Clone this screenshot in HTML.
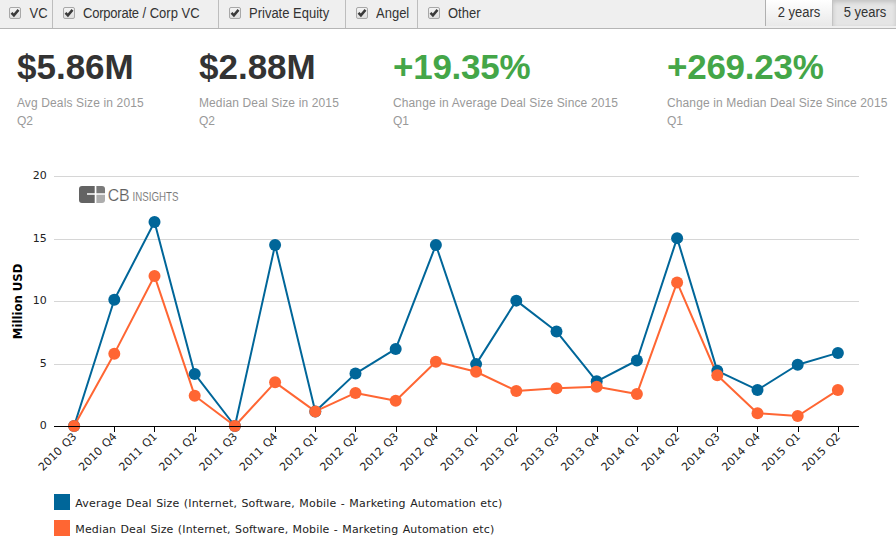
<!DOCTYPE html>
<html><head><meta charset="utf-8"><title>Deal Size</title>
<style>
html,body{margin:0;padding:0;background:#fff;}
body{width:896px;height:552px;overflow:hidden;position:relative;font-family:"Liberation Sans",sans-serif;color:#333;}
#bar{position:absolute;left:0;top:0;width:896px;height:28px;background:#efefef;border-bottom:1px solid #b5b5b5;box-sizing:content-box;}
.item{position:absolute;top:0;height:28px;border-right:1px solid #bdbdbd;box-sizing:border-box;font-size:13px;line-height:28px;color:#333;white-space:nowrap;}
.item .cb{position:absolute;top:7px;width:12px;height:12px;box-sizing:border-box;border:1px solid #a8a8a8;border-radius:2px;background:linear-gradient(#f4f4f4,#dedede);}
.item .cb svg{position:absolute;left:-1px;top:-1px;}
.item .t{position:absolute;top:0;transform:scaleY(1.08);transform-origin:0 18px;}
.btn{position:absolute;top:0;height:26px;box-sizing:border-box;font-size:13px;line-height:26px;text-align:center;color:#333;}
#b2{left:765px;width:68px;border-left:1px solid #b0b0b0;border-right:1px solid #c4c4c4;background:linear-gradient(#ffffff,#e9e9e9);}
#b5{left:833px;width:63px;padding-left:1px;background:#e5e5e5;box-shadow:inset 0 2px 4px rgba(0,0,0,0.16);}
.bt{display:inline-block;transform:scaleY(1.08);transform-origin:0 17px;}
.big{position:absolute;top:47px;font-size:35px;font-weight:bold;line-height:40px;white-space:nowrap;color:#333;}
.big.g{color:#44a648;letter-spacing:-0.25px;}
.lab{position:absolute;top:94px;font-size:12px;line-height:18px;color:#999;white-space:nowrap;letter-spacing:0.14px;}
#chart{position:absolute;left:0;top:0;}
</style></head><body>
<div id="bar">
 <div class="item" style="left:0;width:53px"><span class="cb" style="left:9px"><svg width="12" height="12" viewBox="0 0 12 12"><path d="M2.5 5.9 L4.9 8.4 L9.5 2.9" fill="none" stroke="#3a3a3a" stroke-width="2.5"/></svg></span><span class="t" style="left:29.5px">VC</span></div>
 <div class="item" style="left:53px;width:166px"><span class="cb" style="left:10px"><svg width="12" height="12" viewBox="0 0 12 12"><path d="M2.5 5.9 L4.9 8.4 L9.5 2.9" fill="none" stroke="#3a3a3a" stroke-width="2.5"/></svg></span><span class="t" style="left:30px"><span style="letter-spacing:-0.22px">Corporate</span> / Corp VC</span></div>
 <div class="item" style="left:219px;width:127px"><span class="cb" style="left:10px"><svg width="12" height="12" viewBox="0 0 12 12"><path d="M2.5 5.9 L4.9 8.4 L9.5 2.9" fill="none" stroke="#3a3a3a" stroke-width="2.5"/></svg></span><span class="t" style="left:30px">Private Equity</span></div>
 <div class="item" style="left:346px;width:72px"><span class="cb" style="left:10px"><svg width="12" height="12" viewBox="0 0 12 12"><path d="M2.5 5.9 L4.9 8.4 L9.5 2.9" fill="none" stroke="#3a3a3a" stroke-width="2.5"/></svg></span><span class="t" style="left:30px">Angel</span></div>
 <div class="item" style="left:418px;width:100px;border-right:none"><span class="cb" style="left:10px"><svg width="12" height="12" viewBox="0 0 12 12"><path d="M2.5 5.9 L4.9 8.4 L9.5 2.9" fill="none" stroke="#3a3a3a" stroke-width="2.5"/></svg></span><span class="t" style="left:30px">Other</span></div>
 <div class="btn" id="b2"><span class="bt">2 years</span></div>
 <div class="btn" id="b5"><span class="bt">5 years</span></div>
</div>
<div class="big" style="left:17px">$5.86M</div>
<div class="lab" style="left:16.9px;width:160px"><span id="l1">Avg Deals Size in 2015</span><br>Q2</div>
<div class="big" style="left:199px">$2.88M</div>
<div class="lab" style="left:198.9px;width:160px"><span id="l2">Median Deal Size in 2015</span><br>Q2</div>
<div class="big g" style="left:393px">+19.35%</div>
<div class="lab" style="left:392.9px;width:240px"><span id="l3">Change in Average Deal Size Since 2015</span><br>Q1</div>
<div class="big g" style="left:667px">+269.23%</div>
<div class="lab" style="left:666.9px;width:228px"><span id="l4">Change in Median Deal Size Since 2015</span><br>Q1</div>
<svg id="chart" width="896" height="552" viewBox="0 0 896 552" font-family="'DejaVu Sans', 'Liberation Sans', sans-serif" font-size="11"><rect x="54" y="364" width="805" height="1" fill="#d6d6d6"/><rect x="54" y="301" width="805" height="1" fill="#d6d6d6"/><rect x="54" y="239" width="805" height="1" fill="#d6d6d6"/><rect x="54" y="176" width="805" height="1" fill="#d6d6d6"/><text x="46.8" y="428.90" text-anchor="end" fill="#222222">0</text><text x="46.8" y="366.90" text-anchor="end" fill="#222222">5</text><text x="46.8" y="303.90" text-anchor="end" fill="#222222">10</text><text x="46.8" y="241.90" text-anchor="end" fill="#222222">15</text><text x="46.8" y="178.90" text-anchor="end" fill="#222222">20</text><text transform="translate(22.1 301.4) rotate(-90)" text-anchor="middle" font-size="12.4" font-weight="bold" fill="#000000" textLength="75.5" lengthAdjust="spacingAndGlyphs">Million USD</text><g id="logo"><path d="M82 186 H94.7 V193.3 H87 V194.8 H94.7 V203 H82 a3 3 0 0 1 -3 -3 V189 a3 3 0 0 1 3 -3 Z" fill="#636363"/><path d="M96.4 186 H102 a3 3 0 0 1 3 3 V193.3 H96.4 Z" fill="#7a7a7a"/><path d="M96.4 194.8 H105 V200 a3 3 0 0 1 -3 3 H96.4 Z" fill="#adadad"/><text x="107.7" y="200.6" font-family="'Liberation Sans', sans-serif" font-size="17" fill="#606060" stroke="#ffffff" stroke-width="0.2" paint-order="fill stroke" textLength="22" lengthAdjust="spacingAndGlyphs">CB</text><text x="132.6" y="200.7" font-family="'Liberation Sans', sans-serif" font-size="12" fill="#707070" stroke="#ffffff" stroke-width="0.1" paint-order="fill stroke" textLength="45.8" lengthAdjust="spacingAndGlyphs">INSIGHTS</text></g><rect x="74" y="426" width="1" height="6" fill="#000000"/><rect x="114" y="426" width="1" height="6" fill="#000000"/><rect x="154" y="426" width="1" height="6" fill="#000000"/><rect x="195" y="426" width="1" height="6" fill="#000000"/><rect x="235" y="426" width="1" height="6" fill="#000000"/><rect x="275" y="426" width="1" height="6" fill="#000000"/><rect x="315" y="426" width="1" height="6" fill="#000000"/><rect x="355" y="426" width="1" height="6" fill="#000000"/><rect x="396" y="426" width="1" height="6" fill="#000000"/><rect x="436" y="426" width="1" height="6" fill="#000000"/><rect x="476" y="426" width="1" height="6" fill="#000000"/><rect x="516" y="426" width="1" height="6" fill="#000000"/><rect x="556" y="426" width="1" height="6" fill="#000000"/><rect x="597" y="426" width="1" height="6" fill="#000000"/><rect x="637" y="426" width="1" height="6" fill="#000000"/><rect x="677" y="426" width="1" height="6" fill="#000000"/><rect x="717" y="426" width="1" height="6" fill="#000000"/><rect x="757" y="426" width="1" height="6" fill="#000000"/><rect x="798" y="426" width="1" height="6" fill="#000000"/><rect x="838" y="426" width="1" height="6" fill="#000000"/><polyline points="74.10,426.00 114.30,299.75 154.50,222.03 194.70,373.98 234.90,426.00 275.10,244.99 315.30,411.40 355.50,373.61 395.70,348.90 435.90,244.99 476.10,364.12 516.30,300.63 556.50,331.44 596.70,381.34 636.90,360.51 677.10,238.13 717.30,370.86 757.50,389.95 797.70,364.75 837.90,352.90" fill="none" stroke="#006699" stroke-width="2" stroke-linejoin="round"/><polyline points="74.10,426.00 114.30,353.64 154.50,275.93 194.70,395.69 234.90,426.00 275.10,382.34 315.30,411.40 355.50,392.94 395.70,400.80 435.90,361.75 476.10,371.73 516.30,390.95 556.50,388.20 596.70,386.83 636.90,393.94 677.10,282.41 717.30,375.23 757.50,413.15 797.70,416.02 837.90,390.07" fill="none" stroke="#ff6633" stroke-width="2" stroke-linejoin="round"/><circle cx="74.10" cy="426.00" r="6" fill="#006699"/><circle cx="114.30" cy="299.75" r="6" fill="#006699"/><circle cx="154.50" cy="222.03" r="6" fill="#006699"/><circle cx="194.70" cy="373.98" r="6" fill="#006699"/><circle cx="234.90" cy="426.00" r="6" fill="#006699"/><circle cx="275.10" cy="244.99" r="6" fill="#006699"/><circle cx="315.30" cy="411.40" r="6" fill="#006699"/><circle cx="355.50" cy="373.61" r="6" fill="#006699"/><circle cx="395.70" cy="348.90" r="6" fill="#006699"/><circle cx="435.90" cy="244.99" r="6" fill="#006699"/><circle cx="476.10" cy="364.12" r="6" fill="#006699"/><circle cx="516.30" cy="300.63" r="6" fill="#006699"/><circle cx="556.50" cy="331.44" r="6" fill="#006699"/><circle cx="596.70" cy="381.34" r="6" fill="#006699"/><circle cx="636.90" cy="360.51" r="6" fill="#006699"/><circle cx="677.10" cy="238.13" r="6" fill="#006699"/><circle cx="717.30" cy="370.86" r="6" fill="#006699"/><circle cx="757.50" cy="389.95" r="6" fill="#006699"/><circle cx="797.70" cy="364.75" r="6" fill="#006699"/><circle cx="837.90" cy="352.90" r="6" fill="#006699"/><circle cx="74.10" cy="426.00" r="6" fill="#ff6633"/><circle cx="114.30" cy="353.64" r="6" fill="#ff6633"/><circle cx="154.50" cy="275.93" r="6" fill="#ff6633"/><circle cx="194.70" cy="395.69" r="6" fill="#ff6633"/><circle cx="234.90" cy="426.00" r="6" fill="#ff6633"/><circle cx="275.10" cy="382.34" r="6" fill="#ff6633"/><circle cx="315.30" cy="411.40" r="6" fill="#ff6633"/><circle cx="355.50" cy="392.94" r="6" fill="#ff6633"/><circle cx="395.70" cy="400.80" r="6" fill="#ff6633"/><circle cx="435.90" cy="361.75" r="6" fill="#ff6633"/><circle cx="476.10" cy="371.73" r="6" fill="#ff6633"/><circle cx="516.30" cy="390.95" r="6" fill="#ff6633"/><circle cx="556.50" cy="388.20" r="6" fill="#ff6633"/><circle cx="596.70" cy="386.83" r="6" fill="#ff6633"/><circle cx="636.90" cy="393.94" r="6" fill="#ff6633"/><circle cx="677.10" cy="282.41" r="6" fill="#ff6633"/><circle cx="717.30" cy="375.23" r="6" fill="#ff6633"/><circle cx="757.50" cy="413.15" r="6" fill="#ff6633"/><circle cx="797.70" cy="416.02" r="6" fill="#ff6633"/><circle cx="837.90" cy="390.07" r="6" fill="#ff6633"/><rect x="54" y="426" width="805" height="1" fill="#000000"/><text transform="translate(77.30 437.20) rotate(-45)" text-anchor="end" fill="#222222" word-spacing="1.0" letter-spacing="0.05">2010 Q3</text><text transform="translate(117.50 437.20) rotate(-45)" text-anchor="end" fill="#222222" word-spacing="1.0" letter-spacing="0.05">2010 Q4</text><text transform="translate(157.70 437.20) rotate(-45)" text-anchor="end" fill="#222222" word-spacing="1.0" letter-spacing="0.05">2011 Q1</text><text transform="translate(197.90 437.20) rotate(-45)" text-anchor="end" fill="#222222" word-spacing="1.0" letter-spacing="0.05">2011 Q2</text><text transform="translate(238.10 437.20) rotate(-45)" text-anchor="end" fill="#222222" word-spacing="1.0" letter-spacing="0.05">2011 Q3</text><text transform="translate(278.30 437.20) rotate(-45)" text-anchor="end" fill="#222222" word-spacing="1.0" letter-spacing="0.05">2011 Q4</text><text transform="translate(318.50 437.20) rotate(-45)" text-anchor="end" fill="#222222" word-spacing="1.0" letter-spacing="0.05">2012 Q1</text><text transform="translate(358.70 437.20) rotate(-45)" text-anchor="end" fill="#222222" word-spacing="1.0" letter-spacing="0.05">2012 Q2</text><text transform="translate(398.90 437.20) rotate(-45)" text-anchor="end" fill="#222222" word-spacing="1.0" letter-spacing="0.05">2012 Q3</text><text transform="translate(439.10 437.20) rotate(-45)" text-anchor="end" fill="#222222" word-spacing="1.0" letter-spacing="0.05">2012 Q4</text><text transform="translate(479.30 437.20) rotate(-45)" text-anchor="end" fill="#222222" word-spacing="1.0" letter-spacing="0.05">2013 Q1</text><text transform="translate(519.50 437.20) rotate(-45)" text-anchor="end" fill="#222222" word-spacing="1.0" letter-spacing="0.05">2013 Q2</text><text transform="translate(559.70 437.20) rotate(-45)" text-anchor="end" fill="#222222" word-spacing="1.0" letter-spacing="0.05">2013 Q3</text><text transform="translate(599.90 437.20) rotate(-45)" text-anchor="end" fill="#222222" word-spacing="1.0" letter-spacing="0.05">2013 Q4</text><text transform="translate(640.10 437.20) rotate(-45)" text-anchor="end" fill="#222222" word-spacing="1.0" letter-spacing="0.05">2014 Q1</text><text transform="translate(680.30 437.20) rotate(-45)" text-anchor="end" fill="#222222" word-spacing="1.0" letter-spacing="0.05">2014 Q2</text><text transform="translate(720.50 437.20) rotate(-45)" text-anchor="end" fill="#222222" word-spacing="1.0" letter-spacing="0.05">2014 Q3</text><text transform="translate(760.70 437.20) rotate(-45)" text-anchor="end" fill="#222222" word-spacing="1.0" letter-spacing="0.05">2014 Q4</text><text transform="translate(800.90 437.20) rotate(-45)" text-anchor="end" fill="#222222" word-spacing="1.0" letter-spacing="0.05">2015 Q1</text><text transform="translate(841.10 437.20) rotate(-45)" text-anchor="end" fill="#222222" word-spacing="1.0" letter-spacing="0.05">2015 Q2</text><rect x="54" y="494" width="16" height="16" fill="#006699"/><rect x="54" y="520" width="16" height="16" fill="#ff6633"/><text x="75.3" y="506.8" fill="#222222" word-spacing="0.7" textLength="427" lengthAdjust="spacing">Average Deal Size (Internet, Software, Mobile - Marketing Automation etc)</text><text x="75.3" y="532.8" fill="#222222" word-spacing="0.7" textLength="419" lengthAdjust="spacing">Median Deal Size (Internet, Software, Mobile - Marketing Automation etc)</text></svg>
</body></html>
